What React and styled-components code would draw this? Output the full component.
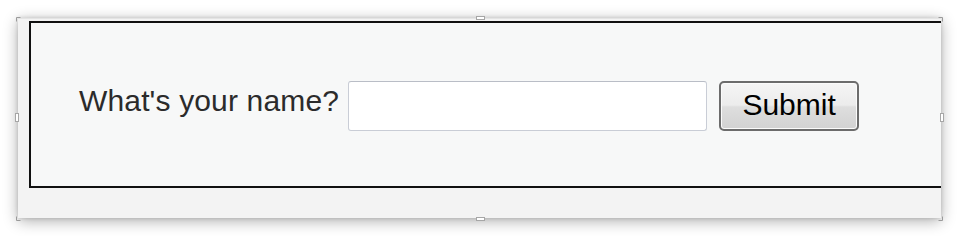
import React from "react";
import styled, { createGlobalStyle } from "styled-components";

const Global = createGlobalStyle`
  html, body { margin: 0; padding: 0; background: #ffffff; }
  body { font-family: "Liberation Sans", Arial, sans-serif; }
`;

const Page = styled.div`
  width: 959px;
  height: 236px;
  padding: 18px 0 0 18px;
  box-sizing: border-box;
  overflow: hidden;
`;

const Card = styled.div`
  position: relative;
  width: 923px;
  height: 200px;
  box-sizing: border-box;
  padding: 2px 0 0 11px;
  background: #f3f3f3;
  box-shadow: 0 3px 14px rgba(0, 0, 0, 0.32), 0 0 4px rgba(0, 0, 0, 0.15);
  border-top: 1px solid #e4e4e4;
`;

const Clip = styled.div`
  overflow: hidden;
  width: 912px;
`;

const Frame = styled.div`
  width: 960px;
  height: 167px;
  box-sizing: border-box;
  border: 2px solid #111111;
  background: #f7f8f8;
  display: flex;
  align-items: center;
  padding-left: 48px;
  padding-top: 2px;
`;

const Label = styled.label`
  font-size: 30px;
  color: #2b2b2b;
  margin-right: 9px;
  padding-bottom: 9px;
  white-space: nowrap;
  letter-spacing: 0.15px;
`;

const NameInput = styled.input`
  width: 359px;
  height: 50px;
  box-sizing: border-box;
  border: 1px solid #c9cdd6;
  border-top-color: #b9bdc6;
  border-radius: 3px;
  background: #ffffff;
  font-family: "Liberation Sans", Arial, sans-serif;
  font-size: 30px;
  outline: none;
  margin: 0 12px 0 0;
  padding: 0 6px;
`;

const SubmitButton = styled.button`
  width: 140px;
  height: 50px;
  box-sizing: border-box;
  border: 2px solid #6c6c6c;
  border-radius: 5px;
  background: linear-gradient(#f5f5f5 0%, #ececec 48%, #dedede 52%, #d2d2d2 100%);
  box-shadow: inset 0 0 0 1px #fbfbfb;
  font-family: "Liberation Sans", Arial, sans-serif;
  font-size: 30px;
  color: #000000;
  padding: 0 0 2px;
  margin: 0;
`;

const Handles = styled.svg`
  position: absolute;
  left: -4px;
  top: -4px;
  width: 931px;
  height: 208px;
  pointer-events: none;
  overflow: visible;
`;

export default function App() {
  return (
    <>
      <Global />
      <Page>
        <Card>
          <Clip>
            <Frame>
              <Label htmlFor="name">What's your name?</Label>
              <NameInput id="name" type="text" />
              <SubmitButton type="button">Submit</SubmitButton>
            </Frame>
          </Clip>
          <Handles viewBox="0 0 931 208">
            <g fill="#ffffff" stroke="#a6a6a6" strokeWidth="1">
              <rect x="462.5" y="1.5" width="8" height="3" />
              <rect x="462.5" y="202.5" width="8" height="3" />
              <rect x="1.5" y="98.5" width="3" height="8" />
              <rect x="926.5" y="98.5" width="3" height="8" />
            </g>
            <g fill="none" stroke="#9a9a9a" strokeWidth="1">
              <path d="M2.5 6.5 V2.5 H6.5" />
              <path d="M2.5 201.5 V205.5 H6.5" />
              <path d="M924.5 2.5 H928.5 V6.5" />
              <path d="M924.5 205.5 H928.5 V201.5" />
            </g>
          </Handles>
        </Card>
      </Page>
    </>
  );
}
